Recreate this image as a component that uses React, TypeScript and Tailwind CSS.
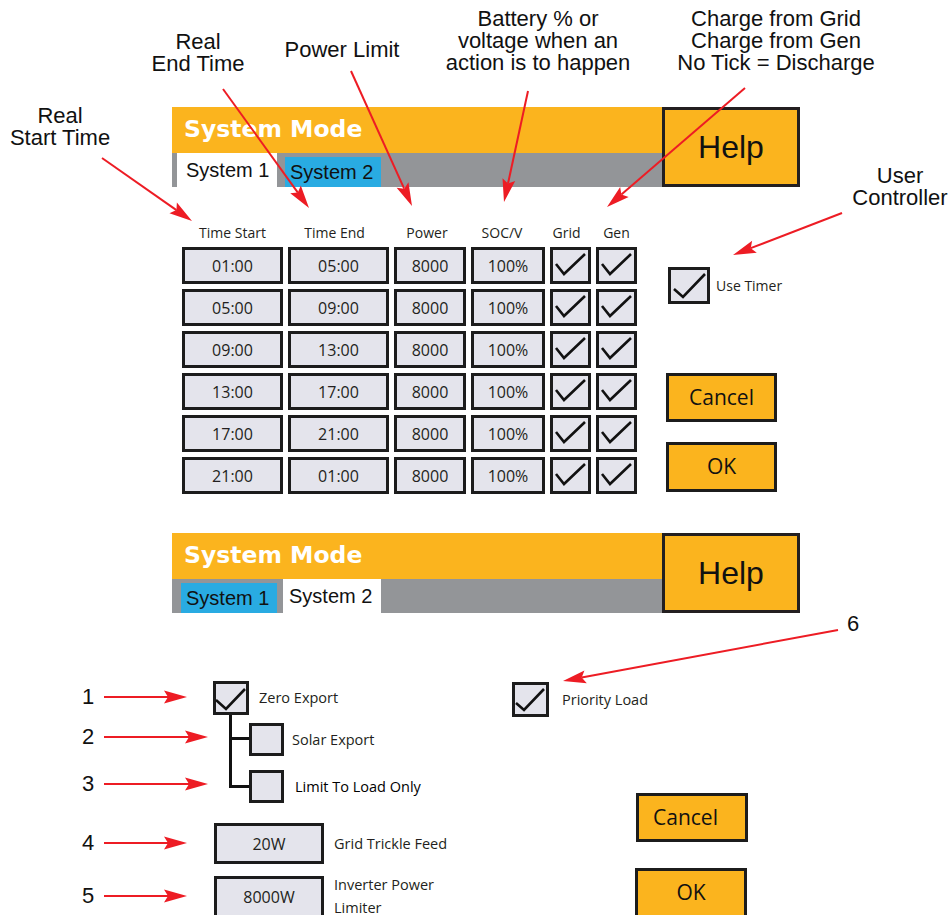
import type { ReactNode } from 'react'

type Pt = [number, number]

const ROWS = [
  ['01:00', '05:00'],
  ['05:00', '09:00'],
  ['09:00', '13:00'],
  ['13:00', '17:00'],
  ['17:00', '21:00'],
  ['21:00', '01:00'],
]

// annotation arrows, page coordinates
const ARROWS: [number, number, number, number][] = [
  [102, 158, 192, 221],
  [223, 89, 309, 208],
  [351, 71, 412, 206],
  [528, 91, 504, 202],
  [745, 88, 607, 207],
  [842, 213, 733, 255],
  [104, 697, 187, 697],
  [104, 737, 208, 737],
  [104, 784, 208, 784],
  [104, 843, 187, 843],
  [104, 896, 187, 896],
  [838, 630, 563, 681],
]

function Arrow({ a }: { a: [number, number, number, number] }) {
  const [x1, y1, x2, y2] = a
  const len = Math.hypot(x2 - x1, y2 - y1)
  const ux = (x2 - x1) / len
  const uy = (y2 - y1) / len
  const head = 23
  const half = 6.5
  const bx = x2 - ux * head
  const by = y2 - uy * head
  const nx = bx + ux * 4
  const ny = by + uy * 4
  const px = -uy * half
  const py = ux * half
  return (
    <g>
      <line x1={x1} y1={y1} x2={nx} y2={ny} stroke="#ed1c24" strokeWidth={2} />
      <polygon
        points={`${x2},${y2} ${bx + px},${by + py} ${nx},${ny} ${bx - px},${by - py}`}
        fill="#ed1c24"
      />
    </g>
  )
}

function Tick({ w, h, pts }: { w: number; h: number; pts: Pt[] }) {
  return (
    <svg className="absolute -left-[3px] -top-[3px]" width={w} height={h} viewBox={`0 0 ${w} ${h}`}>
      <polyline
        points={pts.map(p => p.join(',')).join(' ')}
        fill="none"
        stroke="#111"
        strokeWidth={2.6}
      />
    </svg>
  )
}

function Field({ className, children }: { className: string; children?: ReactNode }) {
  return (
    <div className={`relative border-[3px] border-[#1c1c1c] bg-[#e4e4ec] flex items-center justify-center text-[#231f20] ${className}`}>
      {children}
    </div>
  )
}

function ModePanel({ active }: { active: 1 | 2 }) {
  return (
    <div className="flex pl-[172px]">
      <div className="w-[490px]">
        <div className="h-[46px] bg-[#fbb41e] flex items-center pl-[12px]">
          <span className="font-['DejaVu_Sans'] font-bold text-[23.5px] leading-none text-white">System Mode</span>
        </div>
        {active === 1 ? (
          <div className="h-[34px] bg-[#939598] flex pl-[5px] font-['Liberation_Sans'] text-[20px] text-[#111]">
            <div className="w-[100px] h-full bg-white flex items-center pl-[9px]">System 1</div>
            <div className="ml-[8px] w-[96px] h-[30px] self-end bg-[#29abe2] flex items-center pl-[5px]">System 2</div>
          </div>
        ) : (
          <div className="h-[34px] bg-[#939598] flex pl-[9px] font-['Liberation_Sans'] text-[20px] text-[#111]">
            <div className="w-[96px] h-[30px] self-end bg-[#29abe2] flex items-center pl-[5px]">System 1</div>
            <div className="ml-[6px] w-[98px] h-full bg-white flex items-center pl-[6px]">System 2</div>
          </div>
        )}
      </div>
      <div className="w-[138px] h-[80px] border-[3px] border-[#231f20] bg-[#fbb41e] flex items-center justify-center font-['Liberation_Sans'] text-[32px] text-[#111]">
        Help
      </div>
    </div>
  )
}

function OrangeButton({ className, children }: { className: string; children: ReactNode }) {
  return (
    <div className={`border-[3px] border-[#1c1c1c] bg-[#fbb41e] flex items-center justify-center text-[21px] text-[#111] ${className}`}>
      {children}
    </div>
  )
}

function Note({ className, children }: { className: string; children: ReactNode }) {
  return (
    <div className={`absolute font-['Liberation_Sans'] text-[22px] leading-[22px] text-[#111] text-center whitespace-nowrap ${className}`}>
      {children}
    </div>
  )
}

const GRID_TICK: Pt[] = [[6, 17], [14, 27], [35, 7]]

export default function App() {
  return (
    <div className="relative w-[952px] h-[915px] bg-white overflow-hidden font-['Open_Sans'] text-[#231f20]">
      <div className="h-[107px]" />
      <ModePanel active={1} />

      {/* timer table */}
      <div className="h-[346px] flex pl-[182px] pt-[37px]">
        <div>
          <div className="grid grid-cols-[101px_101px_72px_74px_41px_41px] gap-x-[5px] h-[23px] text-[14px] leading-[17px]">
            <div className="text-center">Time Start</div>
            <div className="text-center pr-[8px]">Time End</div>
            <div className="text-center pr-[6px]">Power</div>
            <div className="text-center pr-[12px]">SOC/V</div>
            <div className="text-center pr-[8px]">Grid</div>
            <div className="text-center">Gen</div>
          </div>
          <div className="grid grid-cols-[101px_101px_72px_74px_41px_41px] gap-x-[5px] gap-y-[5px] text-[16px]">
            {ROWS.map((r, i) => (
              <div key={i} className="contents">
                <Field className="h-[37px]">{r[0]}</Field>
                <Field className="h-[37px]">{r[1]}</Field>
                <Field className="h-[37px]">8000</Field>
                <Field className="h-[37px]">100%</Field>
                <Field className="h-[37px]"><Tick w={41} h={37} pts={GRID_TICK} /></Field>
                <Field className="h-[37px]"><Tick w={41} h={37} pts={GRID_TICK} /></Field>
              </div>
            ))}
          </div>
        </div>
        <div className="ml-[29px] pt-[43px] flex flex-col">
          <div className="ml-[2px] flex items-center">
            <Field className="w-[42px] h-[37px]"><Tick w={42} h={37} pts={[[6, 22], [15, 30], [37, 7]]} /></Field>
            <span className="ml-[6px] text-[14px]">Use Timer</span>
          </div>
          <OrangeButton className="mt-[69px] w-[111px] h-[49px]">Cancel</OrangeButton>
          <OrangeButton className="mt-[20px] w-[111px] h-[50px]">OK</OrangeButton>
        </div>
      </div>

      <ModePanel active={2} />

      {/* export settings */}
      <div className="flex pl-[213px] text-[14.5px]">
        <div className="w-[299px] flex flex-col">
          <div className="mt-[68px] flex items-center">
            <Field className="w-[36px] h-[34px]"><Tick w={36} h={34} pts={[[3, 19], [13, 28], [32, 8]]} /></Field>
            <span className="ml-[10px]">Zero Export</span>
          </div>
          <div className="flex">
            <svg width={36} height={89} viewBox="0 0 36 89">
              <path d="M17.5 0 V71.5 H36 M17.5 23.5 H36" fill="none" stroke="#111" strokeWidth={3} />
            </svg>
            <div className="pt-[8px] flex flex-col gap-[14px]">
              <div className="flex items-center">
                <Field className="w-[35px] h-[33px]" />
                <span className="ml-[8px]">Solar Export</span>
              </div>
              <div className="flex items-center">
                <Field className="w-[35px] h-[33px]" />
                <span className="ml-[11px] font-medium text-[#000]">Limit To Load Only</span>
              </div>
            </div>
          </div>
          <div className="mt-[19px] flex items-center">
            <Field className="ml-[1px] w-[110px] h-[41px] text-[16px]">20W</Field>
            <span className="ml-[10px]">Grid Trickle Feed</span>
          </div>
          <div className="mt-[12px] flex items-start">
            <Field className="ml-[1px] w-[110px] h-[42px] text-[16px]">8000W</Field>
            <div className="ml-[10px] -mt-[2px] leading-[22.5px]">
              Inverter Power
              <br />
              Limiter
            </div>
          </div>
        </div>
        <div className="flex flex-col">
          <div className="mt-[69px] flex items-center">
            <Field className="w-[37px] h-[35px]"><Tick w={37} h={35} pts={[[4, 21], [12, 28], [32, 7]]} /></Field>
            <span className="ml-[13px]">Priority Load</span>
          </div>
          <OrangeButton className="mt-[76px] ml-[124px] w-[112px] h-[49px] pr-[13px]">Cancel</OrangeButton>
          <OrangeButton className="mt-[26px] ml-[123px] w-[112px] h-[50px]">OK</OrangeButton>
        </div>
      </div>

      {/* annotations */}
      <Note className="left-0 top-[105px] w-[120px]">Real<br />Start Time</Note>
      <Note className="left-[138px] top-[31px] w-[120px]">Real<br />End Time</Note>
      <Note className="left-[282px] top-[39px] w-[120px]">Power Limit</Note>
      <Note className="left-[438px] top-[8px] w-[200px]">Battery % or<br />voltage when an<br />action is to happen</Note>
      <Note className="left-[666px] top-[8px] w-[220px]">Charge from Grid<br />Charge from Gen<br />No Tick = Discharge</Note>
      <Note className="left-[840px] top-[165px] w-[120px]">User<br />Controller</Note>
      <Note className="left-[78px] top-[686px] w-[20px]">1</Note>
      <Note className="left-[78px] top-[726px] w-[20px]">2</Note>
      <Note className="left-[78px] top-[773px] w-[20px]">3</Note>
      <Note className="left-[78px] top-[832px] w-[20px]">4</Note>
      <Note className="left-[78px] top-[885px] w-[20px]">5</Note>
      <Note className="left-[843px] top-[613px] w-[20px]">6</Note>

      <svg className="absolute inset-0 pointer-events-none" width={952} height={915}>
        {ARROWS.map((a, i) => (
          <Arrow key={i} a={a} />
        ))}
      </svg>
    </div>
  )
}
